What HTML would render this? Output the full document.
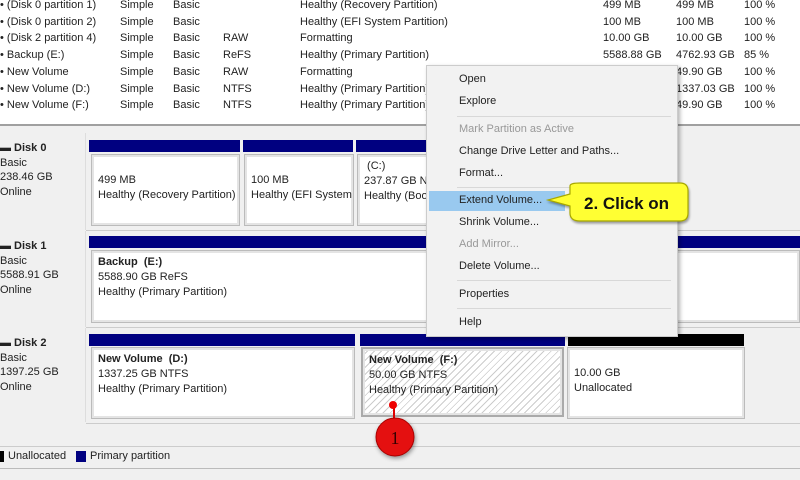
<!DOCTYPE html>
<html><head><meta charset="utf-8"><style>
*{margin:0;padding:0;box-sizing:border-box}
body{width:800px;height:480px;overflow:hidden;background:#f0f0f0;font-family:"Liberation Sans",sans-serif;font-size:11px;color:#222;position:relative}
.a{position:absolute;white-space:nowrap}
#top{position:absolute;left:0;top:0;width:800px;height:126px;background:#fff;border-bottom:2px solid #a0a0a0}
.bar{position:absolute;height:12px;background:#000080}
.box{position:absolute;background:#fff;border:1px solid #bbb;box-shadow:inset 0 0 0 2px #e4e4e4;padding:4px 6px;line-height:15px;overflow:hidden;white-space:nowrap}
.lab{position:absolute;left:0;width:86px;background:#f0f0f0;border-right:1px solid #ddd;line-height:14.5px;padding-top:8px}
.menu{position:absolute;left:426px;top:65px;width:252px;height:272px;background:#f2f2f2;border:1px solid #ccc;box-shadow:2px 2px 4px rgba(0,0,0,.3)}
.mi{position:absolute;left:32px;font-size:11px}
.sep{position:absolute;left:30px;right:6px;height:1px;background:#d8d8d8}
</style></head><body>
<div id="top"></div>
<div class="a" style="left:0;top:-3px;line-height:16.7px">
<div>• (Disk 0 partition 1)</div><div>• (Disk 0 partition 2)</div><div>• (Disk 2 partition 4)</div><div>• Backup (E:)</div><div>• New Volume</div><div>• New Volume (D:)</div><div>• New Volume (F:)</div></div>
<div class="a" style="left:120px;top:-3px;line-height:16.7px"><div>Simple</div><div>Simple</div><div>Simple</div><div>Simple</div><div>Simple</div><div>Simple</div><div>Simple</div></div>
<div class="a" style="left:173px;top:-3px;line-height:16.7px"><div>Basic</div><div>Basic</div><div>Basic</div><div>Basic</div><div>Basic</div><div>Basic</div><div>Basic</div></div>
<div class="a" style="left:223px;top:-3px;line-height:16.7px"><div>&nbsp;</div><div>&nbsp;</div><div>RAW</div><div>ReFS</div><div>RAW</div><div>NTFS</div><div>NTFS</div></div>
<div class="a" style="left:300px;top:-3px;line-height:16.7px"><div>Healthy (Recovery Partition)</div><div>Healthy (EFI System Partition)</div><div>Formatting</div><div>Healthy (Primary Partition)</div><div>Formatting</div><div>Healthy (Primary Partition)</div><div>Healthy (Primary Partition)</div></div>
<div class="a" style="left:603px;top:-3px;line-height:16.7px"><div>499 MB</div><div>100 MB</div><div>10.00 GB</div><div>5588.88 GB</div></div>
<div class="a" style="left:676px;top:-3px;line-height:16.7px"><div>499 MB</div><div>100 MB</div><div>10.00 GB</div><div>4762.93 GB</div><div>49.90 GB</div><div>1337.03 GB</div><div>49.90 GB</div></div>
<div class="a" style="left:744px;top:-3px;line-height:16.7px"><div>100 %</div><div>100 %</div><div>100 %</div><div>85 %</div><div>100 %</div><div>100 %</div><div>100 %</div></div>

<div class="lab" style="top:133px;height:97px"><b>▬ Disk 0</b><br>Basic<br>238.46 GB<br>Online</div>
<div class="lab" style="top:231px;height:96px"><b>▬ Disk 1</b><br>Basic<br>5588.91 GB<br>Online</div>
<div class="lab" style="top:328px;height:94px"><b>▬ Disk 2</b><br>Basic<br>1397.25 GB<br>Online</div>
<div class="a" style="left:86px;top:230px;width:714px;height:1px;background:#ccc"></div>
<div class="a" style="left:86px;top:327px;width:714px;height:1px;background:#ccc"></div>
<div class="a" style="left:86px;top:423px;width:714px;height:1px;background:#ccc"></div>

<div class="bar" style="left:89px;top:140px;width:151px"></div>
<div class="bar" style="left:243px;top:140px;width:110px"></div>
<div class="bar" style="left:356px;top:140px;width:80px"></div>
<div class="box" style="left:91px;top:154px;width:149px;height:72px;padding-top:18px">499 MB<br>Healthy (Recovery Partition)</div>
<div class="box" style="left:244px;top:154px;width:110px;height:72px;padding-top:18px">100 MB<br>Healthy (EFI System Partition)</div>
<div class="box" style="left:357px;top:154px;width:80px;height:72px">&nbsp;(C:)<br>237.87 GB NTFS<br>Healthy (Boot)</div>

<div class="bar" style="left:89px;top:236px;width:711px"></div>
<div class="box" style="left:91px;top:250px;width:709px;height:73px"><b>Backup&nbsp; (E:)</b><br>5588.90 GB ReFS<br>Healthy (Primary Partition)</div>

<div class="bar" style="left:89px;top:334px;width:266px"></div>
<div class="bar" style="left:360px;top:334px;width:205px"></div>
<div class="bar" style="left:568px;top:334px;width:176px;background:#000"></div>
<div class="box" style="left:91px;top:347px;width:264px;height:72px"><b>New Volume&nbsp; (D:)</b><br>1337.25 GB NTFS<br>Healthy (Primary Partition)</div>
<div class="box" style="left:361px;top:347px;width:203px;height:70px;border:2px solid #aaa;background:repeating-linear-gradient(135deg,#fff 0 4px,#ccc 4px 5px)"><b>New Volume&nbsp; (F:)</b><br>50.00 GB NTFS<br>Healthy (Primary Partition)</div>
<div class="box" style="left:567px;top:347px;width:178px;height:72px;padding-top:18px">10.00 GB<br>Unallocated</div>

<div class="a" style="left:0;top:446px;width:800px;height:1px;background:#ccc"></div>
<div class="a" style="left:0;top:451px;width:4px;height:11px;background:#000"></div>
<div class="a" style="left:8px;top:450px">Unallocated</div>
<div class="a" style="left:76px;top:451px;width:10px;height:11px;background:#000080"></div>
<div class="a" style="left:90px;top:450px">Primary partition</div>
<div class="a" style="left:0;top:468px;width:800px;height:1px;background:#bbb"></div>

<div class="menu">
<div class="mi" style="top:7px">Open</div>
<div class="mi" style="top:29px">Explore</div>
<div class="sep" style="top:50px"></div>
<div class="mi" style="top:57px;color:#999">Mark Partition as Active</div>
<div class="mi" style="top:79px">Change Drive Letter and Paths...</div>
<div class="mi" style="top:101px">Format...</div>
<div class="sep" style="top:121px"></div>
<div class="a" style="left:2px;top:125px;width:136px;height:20px;background:#99c9ef"></div>
<div class="mi" style="top:128px">Extend Volume...</div>
<div class="mi" style="top:150px">Shrink Volume...</div>
<div class="mi" style="top:172px;color:#999">Add Mirror...</div>
<div class="mi" style="top:194px">Delete Volume...</div>
<div class="sep" style="top:214px"></div>
<div class="mi" style="top:222px">Properties</div>
<div class="sep" style="top:242px"></div>
<div class="mi" style="top:250px">Help</div>
</div>

<svg class="a" style="left:540px;top:178px" width="160" height="50">
<path d="M30 8 Q30 5 40 5 L140 5 Q148 5 148 13 L148 35 Q148 43 140 43 L40 43 Q30 43 30 35 L30 28 L8 22 L30 16 Z" fill="#ffff33" stroke="#a8a800" stroke-width="1.2" filter="drop-shadow(1px 2px 1px rgba(0,0,0,.35))"/>
<text x="44" y="31" font-family="Liberation Sans" font-weight="bold" font-size="17" fill="#111">2. Click on</text>
</svg>

<svg class="a" style="left:368px;top:398px" width="60" height="64">
<line x1="26" y1="7" x2="26" y2="22" stroke="#d00" stroke-width="2"/>
<circle cx="25" cy="7" r="4" fill="#e00"/>
<circle cx="27" cy="39" r="19" fill="#e41010" stroke="#a00" filter="drop-shadow(1px 2px 2px rgba(0,0,0,.4))"/>
<text x="27" y="46" text-anchor="middle" font-family="Liberation Serif" font-size="18" fill="#300">1</text>
</svg>
</body></html>
